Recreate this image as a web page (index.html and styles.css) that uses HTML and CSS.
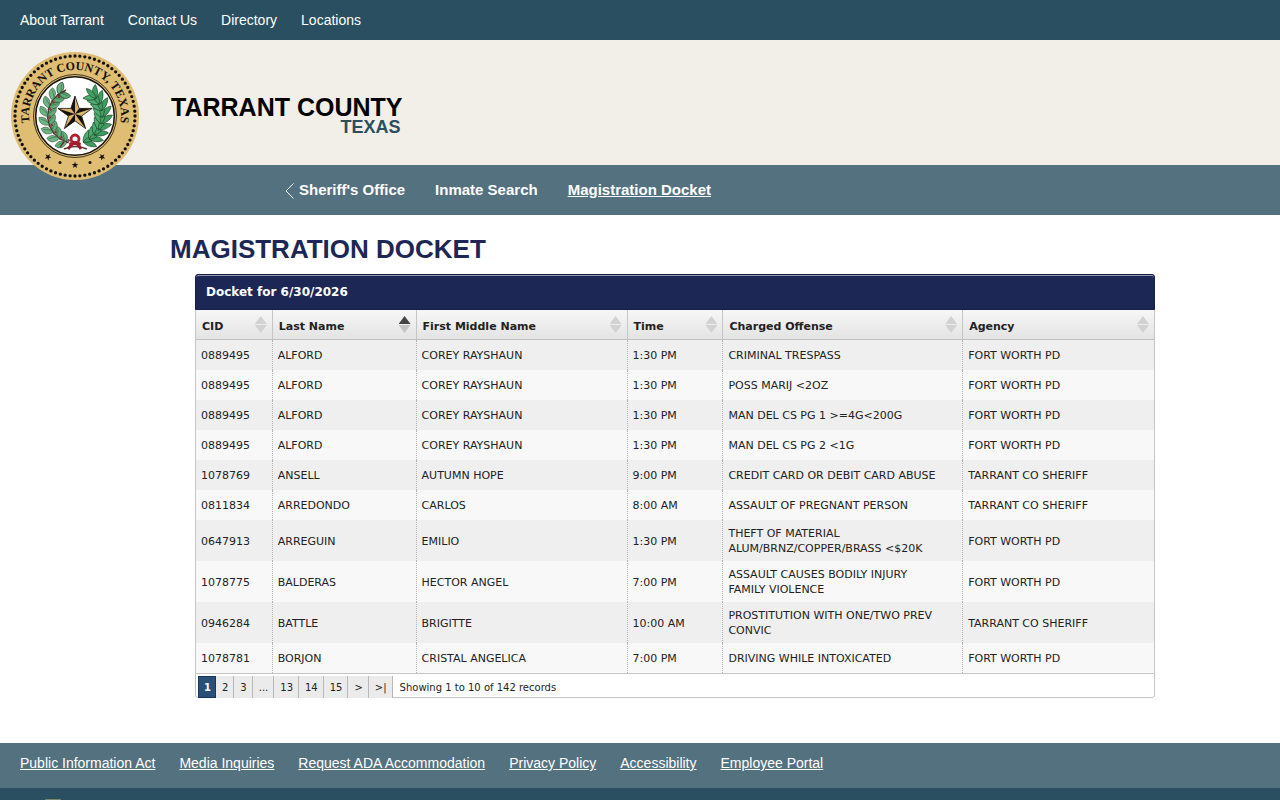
FILE: index.html
```html
<!DOCTYPE html>
<html lang="en">
<head>
<meta charset="utf-8">
<title>Magistration Docket</title>
<link rel="stylesheet" href="styles.css">
</head>
<body>
<nav class="topbar" aria-label="County">
  <a href="#">About Tarrant</a>
  <a href="#">Contact Us</a>
  <a href="#">Directory</a>
  <a href="#">Locations</a>
</nav>
<header class="masthead">
  <a class="seal-link" href="#" aria-label="Tarrant County home">
    <svg class="seal" viewBox="-64 -64 128 128" aria-hidden="true">
      <defs>
        <path id="sealArc" d="M-44.5 11.5 A46 46 0 1 1 44.5 11.5"/>
        <g id="oak" stroke="#24402d" stroke-width=".5">
          <path d="M-27 5V-5" stroke="#59372b" stroke-width="1.500"/>
          <path d="M-27 3 C-30 4-32 2-34 1 C-36-1-36-4-35.500-6 C-33-6-30-5-29-3 Z" fill="#6cb783"/>
          <path d="M-27 2 C-24 3-22 2-20.500 0 C-19-2-19-4-19.500-6 C-22-6-25-4-26-2 Z" fill="#5fae79"/>
          <path d="M-28 0L-34-4M-26 0L-21-4" stroke-width=".4"/>
          <circle cx="-25" cy="4" r="1.100" fill="#8b4a3c" stroke="#4a2a22"/>
        </g>
        <g id="olive" stroke="#164228" stroke-width=".6">
          <path d="M27 4 C31 3 35 0 37-6 C32-6 27-3 27 4Z" fill="#3f9c60"/>
          <path d="M27 4 C24 3 20 0 18.500-6 C24-5 28-2 27 4Z" fill="#4fab6f"/>
          <path d="M27 4 C24-1 25-6 28-10 C31-5 30 0 27 4Z" fill="#459f63"/>
        </g>
        <path id="star" d="M0-18 L4.100-5.600 17.100-5.600 6.600 2.100 10.600 14.600 0 6.900 -10.600 14.600 -6.600 2.100 -17.100-5.600 -4.100-5.600Z"/>
      </defs>
      <circle r="64" fill="#dfbd73"/>
      <circle r="60" fill="none" stroke="#15120d" stroke-width="3.300" stroke-linecap="round" stroke-dasharray="0 1" pathLength="76"/>
      <circle r="41.500" fill="#dfbd73" stroke="#15120d" stroke-width=".8"/>
      <circle r="39.300" fill="#fff" stroke="#15120d" stroke-width="1.500"/>
      <text class="seal-text"><textPath href="#sealArc" startOffset="50%" text-anchor="middle">TARRANT COUNTY, TEXAS</textPath></text>
      <use href="#oak" transform="rotate(-66)"/><use href="#oak" transform="rotate(-48)"/>
      <use href="#oak" transform="rotate(-30)"/><use href="#oak" transform="rotate(-12)"/>
      <use href="#oak" transform="rotate(6)"/><use href="#oak" transform="rotate(24)"/>
      <use href="#oak" transform="rotate(42)"/><use href="#oak" transform="rotate(60)"/>
      <use href="#oak" transform="rotate(60)"/>
      <path d="M-11 26L-15 31" stroke="#59372b" stroke-width="1.500"/>
      <use href="#olive" transform="rotate(64)"/><use href="#olive" transform="rotate(50)"/>
      <use href="#olive" transform="rotate(36)"/><use href="#olive" transform="rotate(22)"/>
      <use href="#olive" transform="rotate(8)"/><use href="#olive" transform="rotate(-6)"/>
      <use href="#olive" transform="rotate(-20)"/><use href="#olive" transform="rotate(-34)"/>
      <use href="#olive" transform="rotate(-48)"/>
      <path d="M-11 33Q0 28 12 33" fill="none" stroke="#59372b" stroke-width="1.500"/>
      <path d="M-2 27L-7 33 M2 27L6 33" stroke="#8e1f2c" stroke-width="3"/>
      <circle cy="23" r="4" fill="#fff" stroke="#b3202f" stroke-width="2.800"/>
      <path d="M-6 27Q0 23 6 27L5 31Q0 27-5 31Z" fill="#a51c2b"/>
      <g transform="translate(0 -2)">
        <use href="#star" fill="#d8b46c" stroke="#15120d" stroke-width=".8"/>
        <path fill="#15120d" d="M0 0V-18L-4.100-5.600Z M0 0L17.100-5.600 4.100-5.600Z M0 0L10.600 14.600 6.600 2.100Z M0 0L-10.600 14.600 0 6.900Z M0 0L-17.100-5.600-6.600 2.100Z"/>
      </g>
      <g fill="#15120d">
        <use href="#star" transform="translate(-27 41) rotate(30) scale(.2)"/>
        <use href="#star" transform="translate(0 49) scale(.2)"/>
        <use href="#star" transform="translate(27 41) rotate(-30) scale(.2)"/>
        <circle cx="-15" cy="46.500" r="1.500"/><circle cx="15" cy="46.500" r="1.500"/>
      </g>
    </svg>
  </a>
  <div class="wordmark"><span class="county">TARRANT COUNTY</span><span class="state">TEXAS</span></div>
</header>
<nav class="section-nav" aria-label="Section">
  <a href="#"><svg class="chevron" viewBox="0 0 9 16" aria-hidden="true"><path d="M8.500 .5L1 8L8.500 15.500"/></svg>Sheriff's Office</a>
  <a href="#">Inmate Search</a>
  <a class="current" href="#" aria-current="page">Magistration Docket</a>
</nav>
<main class="content">
  <h1>MAGISTRATION DOCKET</h1>
  <section class="panel">
    <h2>Docket for 6/30/2026</h2>
    <table class="docket">
      <colgroup><col class="w-cid"><col class="w-last"><col class="w-first"><col class="w-time"><col class="w-offense"><col class="w-agency"></colgroup>
      <thead>
        <tr>
          <th scope="col"><button type="button">CID<span class="sort"></span></button></th>
          <th scope="col" aria-sort="ascending"><button type="button">Last Name<span class="sort asc"></span></button></th>
          <th scope="col"><button type="button">First Middle Name<span class="sort"></span></button></th>
          <th scope="col"><button type="button">Time<span class="sort"></span></button></th>
          <th scope="col"><button type="button">Charged Offense<span class="sort"></span></button></th>
          <th scope="col"><button type="button">Agency<span class="sort"></span></button></th>
        </tr>
      </thead>
      <tbody>
        <tr><td>0889495</td><td>ALFORD</td><td>COREY RAYSHAUN</td><td>1:30 PM</td><td>CRIMINAL TRESPASS</td><td>FORT WORTH PD</td></tr>
        <tr><td>0889495</td><td>ALFORD</td><td>COREY RAYSHAUN</td><td>1:30 PM</td><td>POSS MARIJ &lt;2OZ</td><td>FORT WORTH PD</td></tr>
        <tr><td>0889495</td><td>ALFORD</td><td>COREY RAYSHAUN</td><td>1:30 PM</td><td>MAN DEL CS PG 1 &gt;=4G&lt;200G</td><td>FORT WORTH PD</td></tr>
        <tr><td>0889495</td><td>ALFORD</td><td>COREY RAYSHAUN</td><td>1:30 PM</td><td>MAN DEL CS PG 2 &lt;1G</td><td>FORT WORTH PD</td></tr>
        <tr><td>1078769</td><td>ANSELL</td><td>AUTUMN HOPE</td><td>9:00 PM</td><td>CREDIT CARD OR DEBIT CARD ABUSE</td><td>TARRANT CO SHERIFF</td></tr>
        <tr><td>0811834</td><td>ARREDONDO</td><td>CARLOS</td><td>8:00 AM</td><td>ASSAULT OF PREGNANT PERSON</td><td>TARRANT CO SHERIFF</td></tr>
        <tr><td>0647913</td><td>ARREGUIN</td><td>EMILIO</td><td>1:30 PM</td><td>THEFT OF MATERIAL ALUM/BRNZ/COPPER/BRASS &lt;$20K</td><td>FORT WORTH PD</td></tr>
        <tr><td>1078775</td><td>BALDERAS</td><td>HECTOR ANGEL</td><td>7:00 PM</td><td>ASSAULT CAUSES BODILY INJURY FAMILY VIOLENCE</td><td>FORT WORTH PD</td></tr>
        <tr><td>0946284</td><td>BATTLE</td><td>BRIGITTE</td><td>10:00 AM</td><td>PROSTITUTION WITH ONE/TWO PREV CONVIC</td><td>TARRANT CO SHERIFF</td></tr>
        <tr><td>1078781</td><td>BORJON</td><td>CRISTAL ANGELICA</td><td>7:00 PM</td><td>DRIVING WHILE INTOXICATED</td><td>FORT WORTH PD</td></tr>
      </tbody>
    </table>
    <div class="pager">
      <button type="button" class="on" aria-current="page">1</button><button type="button">2</button><button type="button">3</button><button type="button">...</button><button type="button">13</button><button type="button">14</button><button type="button">15</button><button type="button">&gt;</button><button type="button">&gt;|</button>
      <span class="summary">Showing 1 to 10 of 142 records</span>
    </div>
  </section>
</main>
<footer class="footer">
  <nav class="footer-links" aria-label="Footer">
    <a href="#">Public Information Act</a>
    <a href="#">Media Inquiries</a>
    <a href="#">Request ADA Accommodation</a>
    <a href="#">Privacy Policy</a>
    <a href="#">Accessibility</a>
    <a href="#">Employee Portal</a>
  </nav>
  <div class="footer-base"><span class="footer-seal"></span></div>
</footer>
</body>
</html>
```
FILE: styles.css
```css
* { box-sizing: border-box; }
body {
  margin: 0;
  min-height: 100vh;
  display: flex;
  flex-direction: column;
  background: #fff;
  font-family: "Liberation Sans", Arial, sans-serif;
}
a { color: #fff; text-decoration: none; }
.topbar {
  display: flex;
  align-items: center;
  gap: 24px;
  height: 40px;
  padding: 0 20px;
  background: #2a4f60;
  font-size: 14px;
}
.masthead {
  display: flex;
  align-items: flex-start;
  gap: 32px;
  height: 125px;
  padding: 12px 11px 0;
  background: #f2efe8;
}
.seal-link { position: relative; z-index: 1; }
.seal { display: block; width: 128px; height: 128px; }
.seal-text { font: bold 12px "Liberation Serif", serif; fill: #15120d; }
.wordmark {
  display: flex;
  flex-direction: column;
  align-items: flex-end;
  padding-top: 43px;
  font-weight: bold;
}
.county { font-size: 25px; line-height: 24px; color: #000; }
.state { padding-right: 2px; font-size: 18px; line-height: 16px; color: #2a4f60; }
.section-nav {
  display: flex;
  align-items: center;
  gap: 30px;
  height: 50px;
  padding: 0 0 2px 285px;
  background: #54717f;
  font-size: 15px;
  font-weight: bold;
}
.section-nav a { display: flex; align-items: center; gap: 5px; }
.section-nav .current { text-decoration: underline; }
.chevron {
  width: 9px;
  height: 16px;
  margin-top: 4px;
  fill: none;
  stroke: #fff;
}
.content { padding: 18px 125px 45px 170px; }
h1 {
  margin: 0;
  color: #1d2755;
  font-size: 26px;
  line-height: 32px;
}
.panel {
  margin: 9px 0 0 25px;
  color: #222;
  font-family: "DejaVu Sans", Verdana, sans-serif;
  font-size: 11px;
  line-height: 15px;
}
.panel h2 {
  display: flex;
  align-items: center;
  height: 36px;
  margin: 0;
  padding: 0 10px;
  border: 1px solid #181e42;
  border-radius: 3px 3px 0 0;
  box-shadow: inset 0 1px #9297ae;
  background: #1d2755;
  color: #fff;
  font-size: 12px;
}
.docket {
  width: 100%;
  table-layout: fixed;
  border-spacing: 0;
  border-right: 1px solid #c5c5c5;
}
.w-cid { width: 8%; }
.w-last { width: 15%; }
.w-first { width: 22%; }
.w-time { width: 10%; }
.w-offense { width: 25%; }
.w-agency { width: 20%; }
.docket th {
  height: 30px;
  padding: 0;
  border-bottom: 1px solid #c0c0c0;
  border-left: 1px solid #c5c5c5;
  background: linear-gradient(#f7f7f7, #e3e3e3);
}
.docket th button {
  display: flex;
  align-items: center;
  justify-content: space-between;
  width: 100%;
  height: 29px;
  padding: 3px 5px 0 6px;
  border: 0;
  background: none;
  color: #222;
  font: inherit;
}
.sort {
  display: flex;
  flex-direction: column;
  gap: 1px;
  margin-top: -3px;
}
.sort::before,
.sort::after {
  content: "";
  width: 12px;
  height: 8px;
  background: #d2d2d2;
}
.sort::before { clip-path: polygon(50% 0, 100% 100%, 0 100%); }
.sort::after { clip-path: polygon(0 0, 100% 0, 50% 100%); }
.asc::before { background: #444; }
.asc::after { background: #c4c4c4; }
.docket td {
  height: 30px;
  padding: 6px 16px 5px 5px;
  border-left: 1px dotted #b4b4b4;
}
.docket td:first-child { border-left: 1px solid #c5c5c5; }
.docket tbody tr:nth-child(odd) { background: #efefef; }
.docket tbody tr:nth-child(even) { background: #f8f8f8; }
.pager {
  display: flex;
  align-items: center;
  height: 25px;
  padding: 2px 2px 0;
  border: 1px solid #c5c5c5;
  border-radius: 0 0 3px 3px;
  font-size: 10px;
}
.pager button {
  height: 22px;
  padding: 1px 5px 0 6px;
  border: 0;
  border-right: 1px solid #b8b8b8;
  background: #ebebeb;
  color: #222;
  font: inherit;
}
.pager .on {
  padding: 1px 4px 0 5px;
  border: 1px solid #17375a;
  background: #285078;
  color: #fff;
  font-weight: bold;
}
.summary { padding: 1px 0 0 7px; }
.footer { display: flex; flex-direction: column; flex: 1; }
.footer-links {
  display: flex;
  flex-wrap: wrap;
  gap: 24px;
  padding: 12px 20px 17px;
  background: #54717f;
  font-size: 14px;
  line-height: 16px;
}
.footer-links a { text-decoration: underline; }
.footer-base {
  flex: 1;
  display: flex;
  align-items: flex-end;
  padding-left: 45px;
  background: #2a4f60;
}
.footer-seal {
  width: 16px;
  height: 1px;
  border-radius: 8px 8px 0 0;
  background: #7d866c;
}
```
